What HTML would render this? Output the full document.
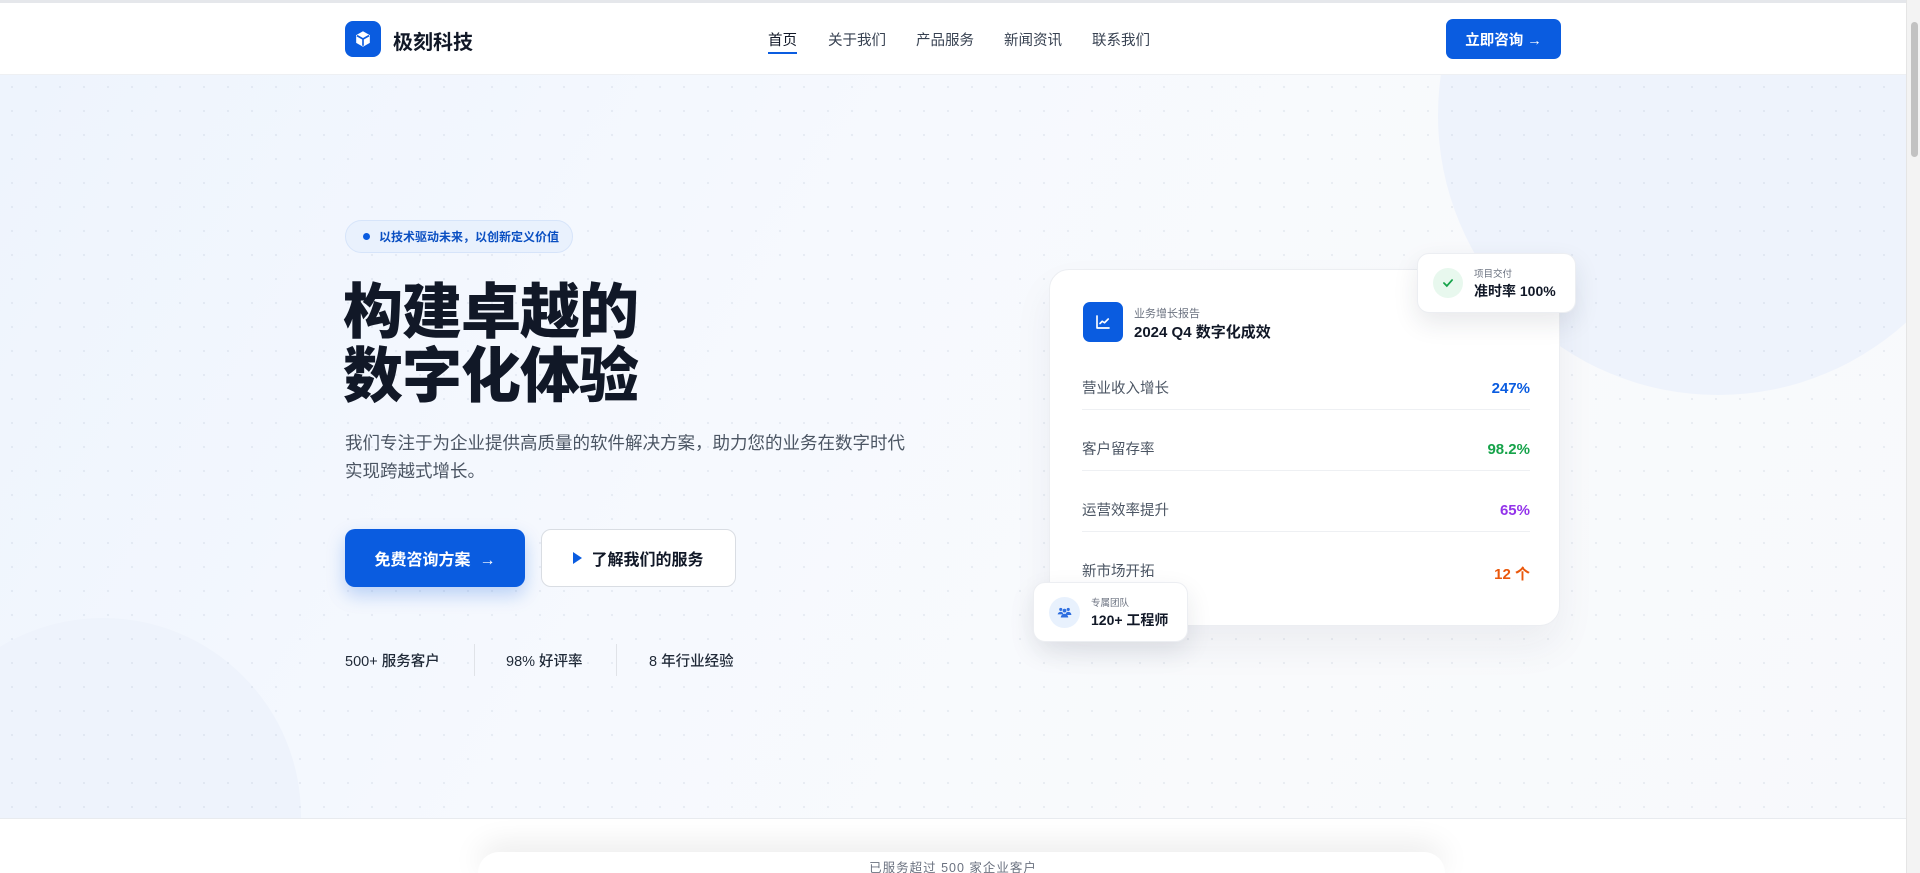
<!DOCTYPE html>
<html style="overflow:hidden;height:873px"><head><meta charset="utf-8"><style>
*{margin:0;padding:0;box-sizing:border-box}
body{width:1920px;height:873px;overflow:hidden;font-family:"Liberation Sans","Noto Sans CJK SC",sans-serif;background:#fff;position:relative;color:#111827}
.nav{position:absolute;top:0;left:0;width:1906px;height:75px;background:#fff;border-top:3px solid #e5e7eb;border-bottom:1px solid #eef0f3;z-index:5}
.logo{position:absolute;left:345px;top:18px;width:36px;height:36px;border-radius:8px;background:#0a5ce0;display:flex;align-items:center;justify-content:center}
.brand{position:absolute;left:393px;top:23px;font-size:20px;font-weight:700;color:#111827}
.menu a{position:absolute;top:26px;font-size:14.5px;color:#374151;text-decoration:none}
.menu a.on{color:#111827}
.menu a.on:after{content:"";position:absolute;left:0;right:0;top:23px;height:2px;background:#0a5ce0}
.cta{position:absolute;left:1446px;top:16px;width:115px;height:40px;border-radius:7px;background:#0a5ce0;color:#fff;font-size:14.5px;font-weight:700;display:flex;align-items:center;justify-content:center}
.hero{position:absolute;top:75px;left:0;width:1906px;height:744px;overflow:hidden;background:linear-gradient(120deg,#eef4fd 0%,#f6f9fe 40%,#f9fafc 70%,#f7f9fc 100%);border-bottom:1px solid #e8ebef}
.dots{position:absolute;inset:0;background-image:radial-gradient(circle,rgba(150,165,190,.16) 1px,transparent 1.3px);background-size:24px 24px}
.c1{position:absolute;left:1438px;top:-240px;width:560px;height:560px;border-radius:50%;background:#eef3fc}
.c2{position:absolute;left:-95px;top:543px;width:396px;height:396px;border-radius:50%;background:#eef3fc}
.badge{position:absolute;left:345px;top:220px;width:228px;height:33px;border-radius:17px;background:#e9f1fd;border:1px solid #d6e4fa;color:#0a4fc2;font-size:12px;font-weight:700;display:flex;align-items:center;padding-left:17px}
.badge i{width:7px;height:7px;border-radius:50%;background:#0a5ce0;margin-right:9px}
h1{position:absolute;left:343px;top:281px;font-size:60px;line-height:64px;font-weight:900;color:#111827;letter-spacing:-1px}
.p{position:absolute;left:345px;top:429px;width:572px;font-size:17.5px;line-height:28px;color:#4b5563}
.b1{position:absolute;left:345px;top:529px;width:180px;height:58px;border-radius:10px;background:#0a5ce0;color:#fff;font-size:16px;font-weight:700;display:flex;align-items:center;justify-content:center;box-shadow:0 8px 18px rgba(10,92,224,.25)}
.b2{position:absolute;left:541px;top:529px;width:195px;height:58px;border-radius:10px;background:#fff;border:1px solid #d9dde3;color:#111827;font-size:16px;font-weight:700;display:flex;align-items:center;justify-content:center}
.b2 b{width:0;height:0;border-left:9px solid #0a5ce0;border-top:6px solid transparent;border-bottom:6px solid transparent;margin-right:9px}
.st{position:absolute;top:650px;font-size:14.5px;color:#1f2937;font-weight:500}
.dv{position:absolute;top:644px;width:1px;height:32px;background:#e0e3e8}
.card{position:absolute;left:1049px;top:269px;width:511px;height:357px;border-radius:20px;background:#fff;border:1px solid #eceef2;box-shadow:0 20px 40px rgba(30,40,60,.06)}
.ic{position:absolute;left:33px;top:32px;width:40px;height:40px;border-radius:7px;background:#0a5ce0;display:flex;align-items:center;justify-content:center}
.sm{font-size:11px;color:#6b7280}
.row{position:absolute;left:32px;width:448px;height:61px;border-bottom:1px solid #eef0f3;font-size:14.5px;color:#4b5563}
.row span{position:absolute;top:28px}
.row b{position:absolute;right:0;top:31px;font-size:15px}
.fl{position:absolute;background:#fff;border-radius:12px;border:1px solid #eceef2;box-shadow:0 10px 25px rgba(30,40,60,.1)}
.foot{position:absolute;left:0;width:1906px;text-align:center;font-size:12.5px;color:#6b7280;top:857px;letter-spacing:1px}
.sh{position:absolute;left:478px;top:852px;width:967px;height:21px;border-radius:30px 30px 0 0;box-shadow:0 -6px 30px rgba(0,0,0,.10);background:#fff}
.sb{position:absolute;right:0;top:0;width:14px;height:873px;background:#f3f3f3;border-left:1px solid #e5e5e5}
.sb i{position:absolute;left:4px;top:22px;width:7px;height:135px;border-radius:4px;background:#c2c2c2}
</style></head><body>
<div class="hero"><div class="c1"></div><div class="c2"></div><div class="dots"></div></div>
<div class="nav">
<div class="logo"><svg width="18" height="18" viewBox="0 0 24 24" fill="none" stroke="#fff" stroke-width="2.2"><path d="M12 3l8 4.5v9L12 21l-8-4.5v-9z" fill="#fff"/><path d="M4 7.5l8 4.5 8-4.5M12 12v9" stroke="#0a5ce0"/></svg></div>
<div class="brand">极刻科技</div>
<div class="menu"><a class="on" style="left:768px">首页</a><a style="left:828px">关于我们</a><a style="left:916px">产品服务</a><a style="left:1004px">新闻资讯</a><a style="left:1092px">联系我们</a></div>
<div class="cta">立即咨询 →</div>
</div>
<div class="badge"><i></i>以技术驱动未来，以创新定义价值</div>
<h1>构建卓越的<br>数字化体验</h1>
<div class="p">我们专注于为企业提供高质量的软件解决方案，助力您的业务在数字时代<br>实现跨越式增长。</div>
<div class="b1">免费咨询方案 &nbsp;→</div>
<div class="b2"><b></b>了解我们的服务</div>
<div class="st" style="left:345px">500+ 服务客户</div><div class="dv" style="left:474px"></div>
<div class="st" style="left:506px">98% 好评率</div><div class="dv" style="left:616px"></div>
<div class="st" style="left:649px">8 年行业经验</div>
<div class="card">
<div class="ic"><svg width="18" height="18" viewBox="0 0 24 24" fill="none" stroke="#fff" stroke-width="2.2" stroke-linecap="round" stroke-linejoin="round"><path d="M4 4v16h16"/><path d="M8 14l3-3 3 2 5-5"/></svg></div>
<div class="sm" style="position:absolute;left:84px;top:35px">业务增长报告</div>
<div style="position:absolute;left:84px;top:51px;font-size:15px;font-weight:700">2024 Q4 数字化成效</div>
<div class="row" style="top:79px"><span>营业收入增长</span><b style="color:#0a5ce0">247%</b></div>
<div class="row" style="top:140px"><span>客户留存率</span><b style="color:#16a34a">98.2%</b></div>
<div class="row" style="top:201px"><span>运营效率提升</span><b style="color:#9333ea">65%</b></div>
<div class="row" style="top:262px;border:0"><span>新市场开拓</span><b style="color:#ea580c">12 个</b></div>
</div>
<div class="fl" style="left:1417px;top:253px;width:159px;height:60px">
<div style="position:absolute;left:15px;top:14px;width:30px;height:30px;border-radius:50%;background:#e8f8ee;display:flex;align-items:center;justify-content:center"><svg width="14" height="14" viewBox="0 0 24 24" fill="none" stroke="#16a34a" stroke-width="3" stroke-linecap="round"><path d="M5 12l5 5 9-10"/></svg></div>
<div class="sm" style="position:absolute;left:56px;top:12px;font-size:9.5px">项目交付</div>
<div style="position:absolute;left:56px;top:27px;font-size:14px;font-weight:700">准时率 100%</div></div>
<div class="fl" style="left:1033px;top:582px;width:155px;height:60px">
<div style="position:absolute;left:15px;top:14px;width:31px;height:31px;border-radius:50%;background:#e8f1fd;display:flex;align-items:center;justify-content:center"><svg width="15" height="13" viewBox="0 0 24 20" fill="#2f6fe0"><circle cx="6" cy="5" r="2.5"/><circle cx="18" cy="5" r="2.5"/><circle cx="12" cy="7" r="3"/><path d="M1 14c0-3 2-5 5-5s4 2 4 4H1zM14 13c0-2 1-4 4-4s5 2 5 5h-9zM6 18c0-3 3-6 6-6s6 3 6 6z"/></svg></div>
<div class="sm" style="position:absolute;left:57px;top:12px;font-size:9.5px">专属团队</div>
<div style="position:absolute;left:57px;top:27px;font-size:14px;font-weight:700">120+ 工程师</div></div>
<div class="sh"></div>
<div class="foot">已服务超过 500 家企业客户</div>
<div class="sb"><i></i></div>
</body></html>
